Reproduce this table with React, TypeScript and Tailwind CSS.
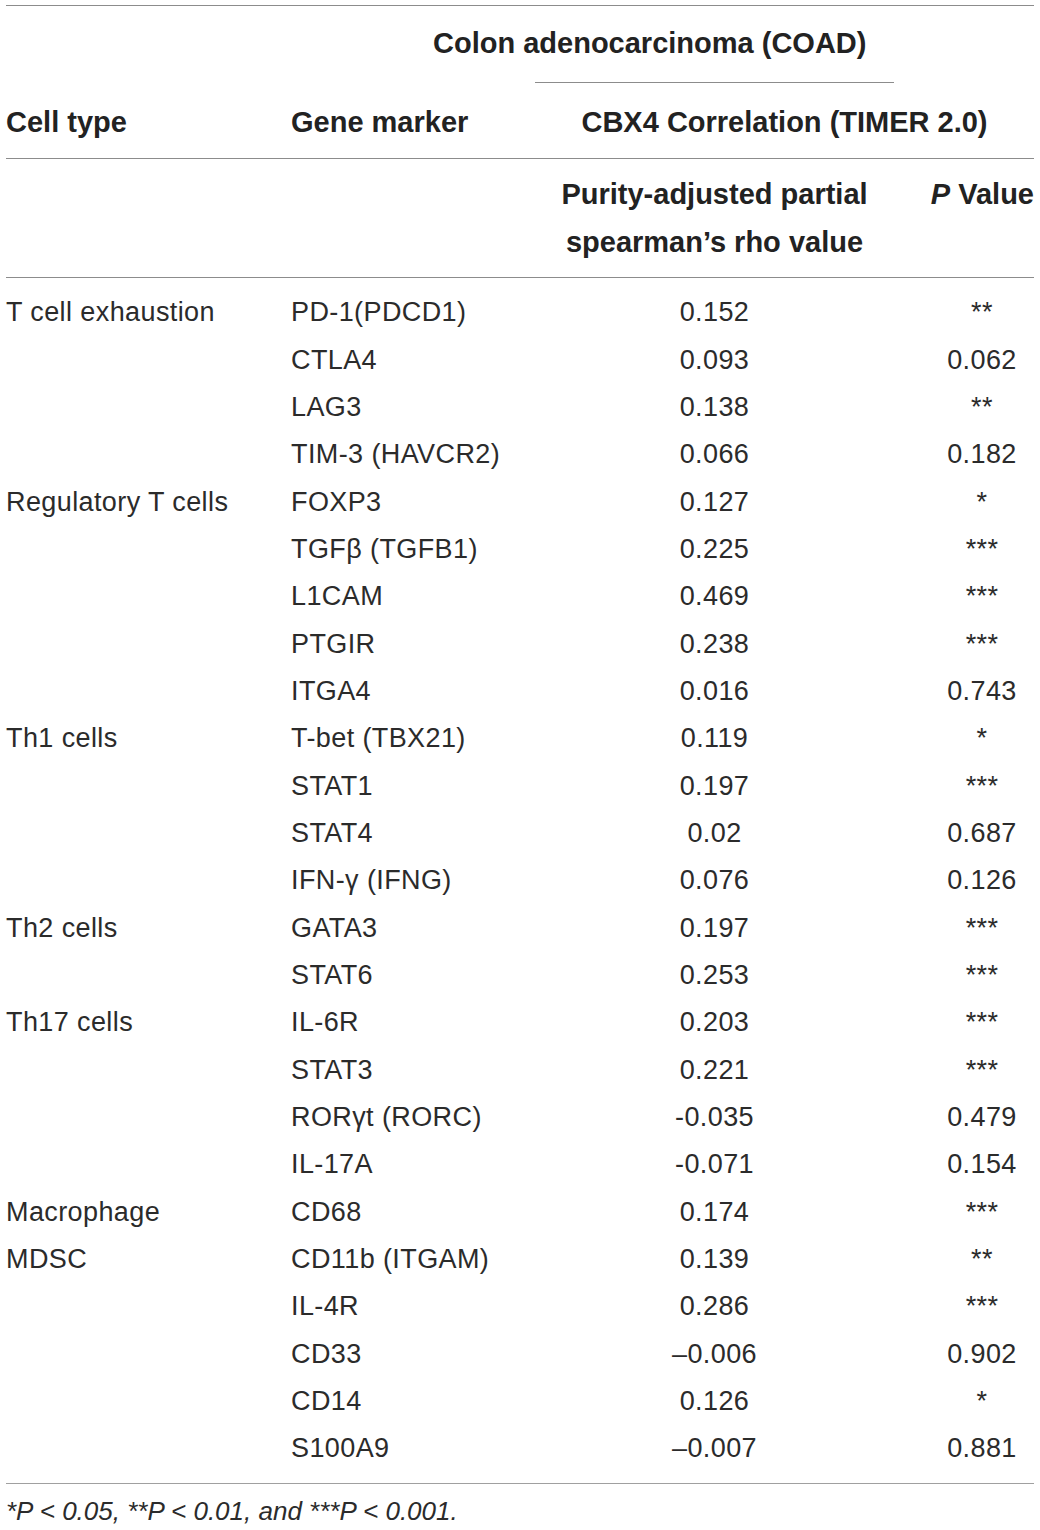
import React from "react";

type Row = { cell?: string; gene: string; rho: string; p: string };

const rows: Row[] = [
  { cell: "T cell exhaustion", gene: "PD-1(PDCD1)", rho: "0.152", p: "**" },
  { gene: "CTLA4", rho: "0.093", p: "0.062" },
  { gene: "LAG3", rho: "0.138", p: "**" },
  { gene: "TIM-3 (HAVCR2)", rho: "0.066", p: "0.182" },
  { cell: "Regulatory T cells", gene: "FOXP3", rho: "0.127", p: "*" },
  { gene: "TGFβ (TGFB1)", rho: "0.225", p: "***" },
  { gene: "L1CAM", rho: "0.469", p: "***" },
  { gene: "PTGIR", rho: "0.238", p: "***" },
  { gene: "ITGA4", rho: "0.016", p: "0.743" },
  { cell: "Th1 cells", gene: "T-bet (TBX21)", rho: "0.119", p: "*" },
  { gene: "STAT1", rho: "0.197", p: "***" },
  { gene: "STAT4", rho: "0.02", p: "0.687" },
  { gene: "IFN-γ (IFNG)", rho: "0.076", p: "0.126" },
  { cell: "Th2 cells", gene: "GATA3", rho: "0.197", p: "***" },
  { gene: "STAT6", rho: "0.253", p: "***" },
  { cell: "Th17 cells", gene: "IL-6R", rho: "0.203", p: "***" },
  { gene: "STAT3", rho: "0.221", p: "***" },
  { gene: "RORγt (RORC)", rho: "-0.035", p: "0.479" },
  { gene: "IL-17A", rho: "-0.071", p: "0.154" },
  { cell: "Macrophage", gene: "CD68", rho: "0.174", p: "***" },
  { cell: "MDSC", gene: "CD11b (ITGAM)", rho: "0.139", p: "**" },
  { gene: "IL-4R", rho: "0.286", p: "***" },
  { gene: "CD33", rho: "–0.006", p: "0.902" },
  { gene: "CD14", rho: "0.126", p: "*" },
  { gene: "S100A9", rho: "–0.007", p: "0.881" }
];

const cols = "grid grid-cols-[285px_244px_359px_36px_104px]";

export default function App() {
  return (
    <div className="min-h-[1530px] w-[1040px] bg-white px-[6px] pt-[5px] text-[#2b2b2b]" style={{ fontFamily: "'Liberation Sans', Arial, sans-serif" }}>
      <div className="h-px bg-[#8c8c8c]" />

      {/* header */}
      <div className="font-bold text-[29px] text-[#222]">
        <div className="flex h-[76px] items-center pl-[427px]">Colon adenocarcinoma (COAD)</div>
        <div className="ml-[529px] h-px w-[359px] bg-[#8c8c8c]" />
        <div className={`${cols} h-[75px] items-center pt-[5px]`}>
          <div>Cell type</div>
          <div>Gene marker</div>
          <div className="col-span-3 text-center">CBX4 Correlation (TIMER 2.0)</div>
        </div>
        <div className="h-px bg-[#8c8c8c]" />
        <div className={`${cols} pt-[11px] pb-[11px] leading-[48px]`}>
          <div />
          <div />
          <div className="whitespace-nowrap text-center">Purity-adjusted partial<br />spearman’s rho value</div>
          <div />
          <div className="whitespace-nowrap text-right"><i>P</i> Value</div>
        </div>
        <div className="h-px bg-[#8c8c8c]" />
      </div>

      {/* body */}
      <div className="py-[11px] text-[27px] tracking-[0.4px]">
        {rows.map((row, i) => (
          <div key={i} className={`${cols} h-[47.33px] items-center`}>
            <div>{row.cell ?? ""}</div>
            <div className="whitespace-nowrap">{row.gene}</div>
            <div className="text-center">{row.rho}</div>
            <div />
            <div className="text-center">{row.p}</div>
          </div>
        ))}
      </div>
      <div className="h-px bg-[#a0a0a0]" />

      <p className="pt-[8px] text-[26px] italic">*P &lt; 0.05, **P &lt; 0.01, and ***P &lt; 0.001.</p>
    </div>
  );
}
